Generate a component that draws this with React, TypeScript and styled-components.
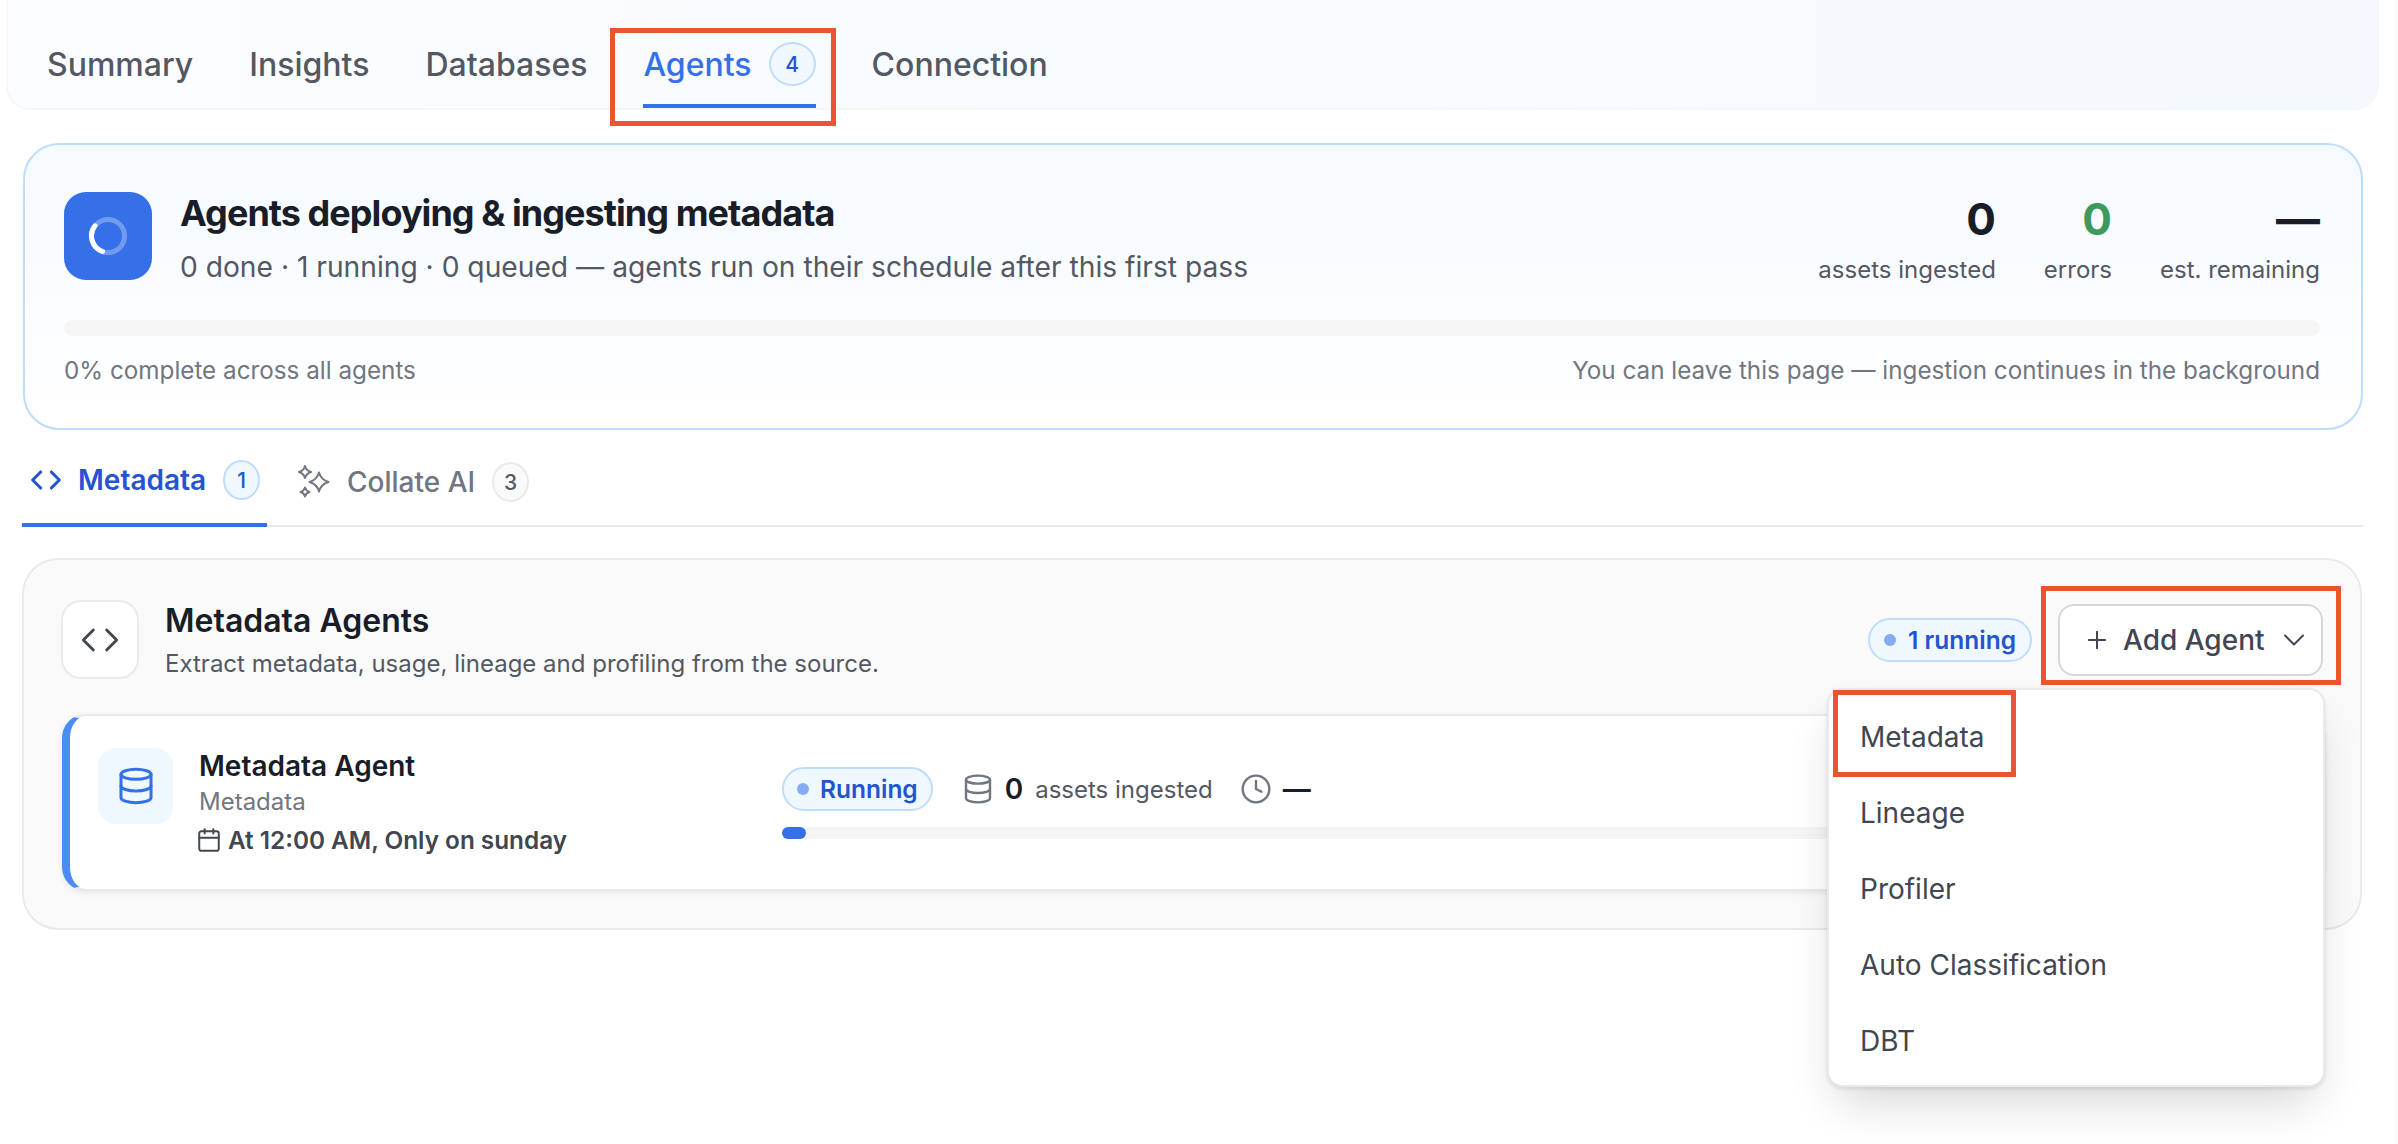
import React from "react";
import styled, { createGlobalStyle } from "styled-components";
import { Code, Database, Clock, Calendar, Plus, ChevronDown } from "lucide-react";

const Global = createGlobalStyle`
  html, body { margin: 0; padding: 0; background: #fff; }
  body { font-family: Inter, "Noto Sans", sans-serif; color: #181d27; overflow: hidden; }
  * { box-sizing: border-box; }
`;

const Page = styled.div`
  position: relative;
  width: 2398px;
  height: 1144px;
  padding: 0 31px 0 22px;
  border-right: 4px solid #fbfbff;
  overflow: hidden;
`;

const TopBar = styled.nav`
  display: flex;
  align-items: flex-start;
  gap: 56px;
  height: 110px;
  margin: 0 -16px 0 -16px;
  padding: 43px 0 0 39px;
  border-radius: 0 0 24px 24px;
  border: 2px solid #f4f8fd;
  border-top: 0;
  background: linear-gradient(90deg, #fbfdff, #f4f9fe);
`;

const TopTab = styled.div<{ $active?: boolean }>`
  display: flex;
  align-items: flex-start;
  gap: 17px;
  height: 65px;
  font-size: 32px;
  line-height: 44px;
  font-weight: 500;
  color: ${(p) => (p.$active ? "#3570e8" : "#535862")};
  border-bottom: ${(p) => (p.$active ? "4px solid #3570e8" : "none")};
  white-space: nowrap;
`;

const Count = styled.span<{ $active?: boolean; $w?: number; $h?: number }>`
  display: inline-flex;
  flex: none;
  align-items: center;
  justify-content: center;
  width: ${(p) => p.$w ?? 37}px;
  height: ${(p) => p.$h ?? 40}px;
  margin-top: ${(p) => (p.$h ? -1 : 0)}px;
  border-radius: 50%;
  font-size: 21px;
  font-weight: 500;
  line-height: 1;
  color: ${(p) => (p.$active ? "#2454cf" : "#535862")};
  background: ${(p) => (p.$active ? "#eff7ff" : "#fafafa")};
  border: 2px solid ${(p) => (p.$active ? "#c0dcfb" : "#e9eaeb")};
`;

const Hero = styled.section`
  margin-top: 33px;
  width: 2340px;
  margin-left: 1px;
  height: 287px;
  padding: 47px 41px 0 39px;
  border: 2px solid #bfdcfb;
  border-radius: 36px;
  background: linear-gradient(180deg, #f5faff 0%, #ffffff 100%);
`;

const HeroTop = styled.div`
  display: flex;
  align-items: flex-start;
  height: 128px;
`;

const Spinner = styled.div`
  display: flex;
  align-items: center;
  justify-content: center;
  width: 88px;
  height: 88px;
  border-radius: 22px;
  background: #3570e8;
  flex: none;
`;

const HeroText = styled.div`
  flex: 1;
  padding-left: 28px;
`;

const HeroTitle = styled.h1`
  margin: -1px 0 0;
  font-size: 36px;
  line-height: 44px;
  font-weight: 700;
  letter-spacing: -0.95px;
  color: #181d27;
`;

const HeroSub = styled.p`
  margin: 14px 0 0;
  font-size: 28.2px;
  line-height: 36px;
  color: #535862;
`;

const Stats = styled.div`
  display: flex;
  gap: 48px;
  padding-top: 2px;
`;

const Stat = styled.div`
  display: flex;
  flex-direction: column;
  align-items: flex-end;
`;

const StatValue = styled.div<{ $color?: string }>`
  font-size: 44px;
  line-height: 56px;
  font-weight: 700;
  margin-top: -3px;
  color: ${(p) => p.$color ?? "#181d27"};
`;

const StatLabel = styled.div`
  margin-top: 6px;
  font-size: 24px;
  line-height: 34px;
  color: #535862;
`;

const HeroBar = styled.div`
  height: 16px;
  border-radius: 8px;
  background: #f5f5f5;
`;

const HeroFoot = styled.div`
  display: flex;
  justify-content: space-between;
  margin-top: 19px;
  font-size: 24.25px;
  line-height: 32px;
  color: #717680;
`;

const SubTabs = styled.div`
  display: flex;
  align-items: flex-start;
  height: 97px;
  width: 2341px;
  margin-top: 0;
  border-bottom: 2px solid #e9eaeb;
`;

const SubTab = styled.div<{ $active?: boolean }>`
  display: flex;
  align-items: center;
  height: 97px;
  padding: 7px 12px 0 ${(p) => (p.$active ? 8 : 0)}px;
  margin-right: ${(p) => (p.$active ? 30 : 0)}px;
  width: ${(p) => (p.$active ? "245px" : "auto")};
  font-size: 28px;
  font-weight: ${(p) => (p.$active ? 600 : 500)};
  color: ${(p) => (p.$active ? "#2454cf" : "#717680")};
  border-bottom: ${(p) => (p.$active ? "4px solid #3570e8" : "none")};
  svg { flex: none; }
`;

const SubLabel = styled.span`
  margin: 0 17px 0 16px;
  white-space: nowrap;
`;

const Panel = styled.section`
  margin-top: 31px;
  width: 2340px;
  height: 372px;
  padding: 40px 37px 0 37px;
  border: 2px solid #e9eaeb;
  border-radius: 36px;
  background: #fafafa;
`;

const PanelHead = styled.header`
  display: flex;
  align-items: flex-start;
  height: 114px;
`;

const IconTile = styled.div`
  display: flex;
  align-items: center;
  justify-content: center;
  width: 78px;
  height: 79px;
  border: 2px solid #e9eaeb;
  border-radius: 20px;
  background: #fff;
  color: #414651;
  flex: none;
`;

const PanelText = styled.div`
  flex: 1;
  padding-left: 26px;
`;

const PanelTitle = styled.h2`
  margin: 0;
  font-size: 32px;
  line-height: 42px;
  font-weight: 600;
  color: #181d27;
`;

const PanelSub = styled.p`
  margin: 5px 0 0;
  font-size: 24px;
  line-height: 34px;
  color: #535862;
`;

const Pill = styled.span`
  display: inline-flex;
  align-items: center;
  gap: 11px;
  height: 44px;
  padding: 0 13px;
  border: 2px solid #c0dcfb;
  border-radius: 22px;
  background: #eff7ff;
  color: #2454cf;
  font-size: 24.5px;
  font-weight: 600;
  white-space: nowrap;
`;

const Dot = styled.i`
  width: 12px;
  height: 12px;
  border-radius: 50%;
  background: #84adf6;
`;

const HeadPill = styled(Pill)`
  margin-top: 18px;
  margin-right: 26px;
  padding: 0 14px;
  gap: 12px;
`;

const AddButton = styled.button`
  display: flex;
  align-items: center;
  width: 265px;
  height: 72px;
  margin-top: 4px;
  padding: 0 0 0 23px;
  border: 2px solid #d5d7da;
  border-radius: 16px;
  background: #fff;
  color: #414651;
  font-family: inherit;
  font-size: 28px;
  font-weight: 500;
  white-space: nowrap;
  svg { flex: none; }
`;

const AddLabel = styled.span`
  margin: 0 11px 0 12px;
`;

const AgentCard = styled.article`
  display: flex;
  align-items: flex-start;
  position: relative;
  width: 2262px;
  height: 177px;
  margin-left: 1px;
  padding: 32px 0 0 28px;
  border: 2px solid #e9eaeb;
  border-left: 8px solid #4a8cf0;
  border-radius: 24px;
  background: #fff;
  box-shadow: 0 2px 6px rgba(10, 13, 18, 0.08);
`;

const DbTile = styled.div`
  display: flex;
  align-items: center;
  justify-content: center;
  width: 75px;
  height: 76px;
  border-radius: 18px;
  background: #eff7ff;
  color: #3570e8;
  flex: none;
`;

const AgentInfo = styled.div`
  width: 609px;
  flex: none;
  padding-left: 26px;
  margin-top: -1px;
`;

const AgentName = styled.div`
  font-size: 28px;
  line-height: 38px;
  font-weight: 600;
  color: #181d27;
`;

const AgentType = styled.div`
  margin-top: 0;
  font-size: 24px;
  line-height: 34px;
  color: #717680;
`;

const Schedule = styled.div`
  display: flex;
  align-items: center;
  gap: 6px;
  margin-top: 4px;
  font-size: 24.3px;
  line-height: 34px;
  font-weight: 600;
  color: #414651;
  svg { margin-left: -3px; }
`;

const Progress = styled.div`
  flex: 1;
  padding-top: 19px;
  padding-right: 80px;
`;

const ProgressRow = styled.div`
  display: flex;
  align-items: center;
  height: 44px;
`;

const MetaIcon = styled.span<{ $gap: number }>`
  display: inline-flex;
  margin-left: ${(p) => p.$gap}px;
  color: #717680;
`;

const MetaValue = styled.b`
  margin-left: 11px;
  font-size: 28px;
  font-weight: 600;
  color: #181d27;
`;

const MetaLabel = styled.span`
  margin-left: 12px;
  font-size: 24px;
  color: #535862;
`;

const Track = styled.div`
  height: 12px;
  margin-top: 16px;
  border-radius: 6px;
  background: #f5f5f5;
`;

const Fill = styled.div`
  width: 24px;
  height: 12px;
  border-radius: 6px;
  background: #3570e8;
`;

const Menu = styled.ul`
  position: absolute;
  left: 1827px;
  top: 688px;
  width: 498px;
  height: 399px;
  margin: 0;
  padding: 9px 0 0;
  list-style: none;
  border: 2px solid #e9eaeb;
  border-radius: 16px;
  background: #fff;
  box-shadow: 0 24px 48px -12px rgba(10, 13, 18, 0.18), 0 2px 4px rgba(10, 13, 18, 0.1);
`;

const MenuItem = styled.li`
  height: 76px;
  padding-left: 31px;
  font-size: 28px;
  line-height: 76px;
  color: #414651;
`;

const Callout = styled.div<{ $l: number; $t: number; $w: number; $h: number }>`
  position: absolute;
  left: ${(p) => p.$l}px;
  top: ${(p) => p.$t}px;
  width: ${(p) => p.$w}px;
  height: ${(p) => p.$h}px;
  border: 5px solid #ea5430;
  pointer-events: none;
`;

const star = (x: number, y: number, r: number) => {
  const k = r * 0.22;
  return `M${x} ${y - r} Q${x + k} ${y - k} ${x + r} ${y} Q${x + k} ${y + k} ${x} ${y + r} Q${x - k} ${y + k} ${x - r} ${y} Q${x - k} ${y - k} ${x} ${y - r} Z`;
};

const Sparkle = () => (
  <svg width="34" height="34" viewBox="0 0 34 34" fill="none" stroke="currentColor" strokeWidth="2" strokeLinejoin="round">
    <path d={star(22, 17, 9.5)} />
    <path d={star(8, 7, 6)} />
    <path d={star(8, 27, 4.5)} />
  </svg>
);

const Ring = () => (
  <svg width="40" height="40" viewBox="0 0 40 40" fill="none" strokeWidth="5">
    <circle cx="20" cy="20" r="16.5" stroke="rgba(255,255,255,0.3)" />
    <path d="M7 9.8 A16.5 16.5 0 0 0 14.5 35.5" stroke="#fff" strokeLinecap="round" />
  </svg>
);

export default function App() {
  return (
    <Page>
      <Global />
      <TopBar>
        <TopTab>Summary</TopTab>
        <TopTab>Insights</TopTab>
        <TopTab>Databases</TopTab>
        <TopTab $active>
          Agents
          <Count $active $w={47} $h={44}>4</Count>
        </TopTab>
        <TopTab>Connection</TopTab>
      </TopBar>

      <Hero>
        <HeroTop>
          <Spinner><Ring /></Spinner>
          <HeroText>
            <HeroTitle>Agents deploying &amp; ingesting metadata</HeroTitle>
            <HeroSub>0 done · 1 running · 0 queued — agents run on their schedule after this first pass</HeroSub>
          </HeroText>
          <Stats>
            <Stat><StatValue>0</StatValue><StatLabel>assets ingested</StatLabel></Stat>
            <Stat><StatValue $color="#3d9a5c">0</StatValue><StatLabel>errors</StatLabel></Stat>
            <Stat><StatValue>—</StatValue><StatLabel>est. remaining</StatLabel></Stat>
          </Stats>
        </HeroTop>
        <HeroBar />
        <HeroFoot>
          <span>0% complete across all agents</span>
          <span>You can leave this page — ingestion continues in the background</span>
        </HeroFoot>
      </Hero>

      <SubTabs>
        <SubTab $active>
          <Code size={32} strokeWidth={2.3} />
          <SubLabel>Metadata</SubLabel>
          <Count $active>1</Count>
        </SubTab>
        <SubTab>
          <Sparkle />
          <SubLabel>Collate AI</SubLabel>
          <Count>3</Count>
        </SubTab>
      </SubTabs>

      <Panel>
        <PanelHead>
          <IconTile><Code size={40} strokeWidth={1.7} /></IconTile>
          <PanelText>
            <PanelTitle>Metadata Agents</PanelTitle>
            <PanelSub>Extract metadata, usage, lineage and profiling from the source.</PanelSub>
          </PanelText>
          <HeadPill><Dot />1 running</HeadPill>
          <AddButton>
            <Plus size={28} strokeWidth={1.7} />
            <AddLabel>Add Agent</AddLabel>
            <ChevronDown size={36} strokeWidth={1.3} />
          </AddButton>
        </PanelHead>
        <AgentCard>
          <DbTile><Database size={40} strokeWidth={1.8} /></DbTile>
          <AgentInfo>
            <AgentName>Metadata Agent</AgentName>
            <AgentType>Metadata</AgentType>
            <Schedule><Calendar size={26} strokeWidth={1.8} />At 12:00 AM, Only on sunday</Schedule>
          </AgentInfo>
          <Progress>
            <ProgressRow>
              <Pill><Dot />Running</Pill>
              <MetaIcon $gap={29}><Database size={32} strokeWidth={1.8} /></MetaIcon>
              <MetaValue>0</MetaValue>
              <MetaLabel>assets ingested</MetaLabel>
              <MetaIcon $gap={27}><Clock size={32} strokeWidth={1.8} /></MetaIcon>
              <MetaValue>—</MetaValue>
            </ProgressRow>
            <Track><Fill /></Track>
          </Progress>
        </AgentCard>
      </Panel>

      <Menu>
        <MenuItem>Metadata</MenuItem>
        <MenuItem>Lineage</MenuItem>
        <MenuItem>Profiler</MenuItem>
        <MenuItem>Auto Classification</MenuItem>
        <MenuItem>DBT</MenuItem>
      </Menu>

      <Callout $l={610} $t={28} $w={226} $h={98} />
      <Callout $l={2041} $t={586} $w={300} $h={99} />
      <Callout $l={1833} $t={690} $w={183} $h={87} />
    </Page>
  );
}
